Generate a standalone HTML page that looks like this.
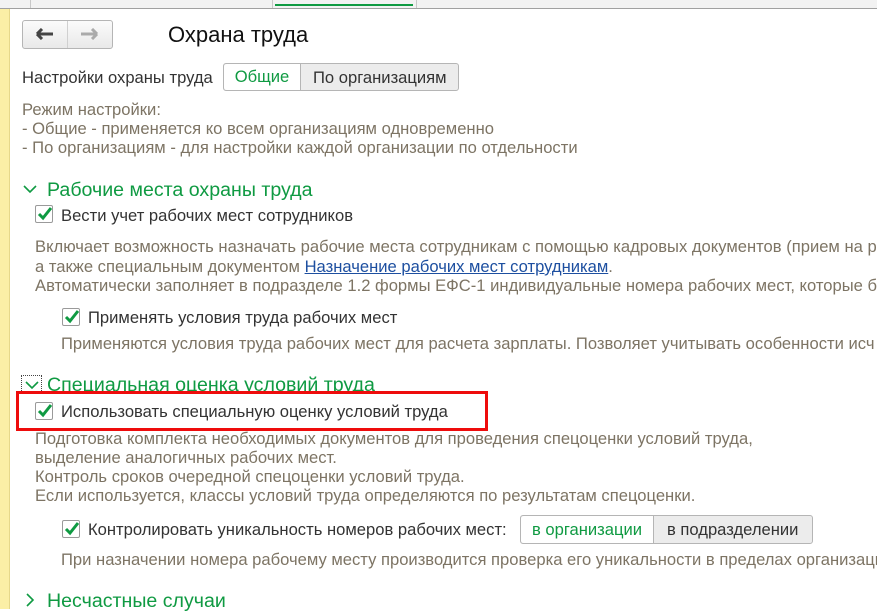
<!DOCTYPE html>
<html><head><meta charset="utf-8"><style>
body{margin:0;width:877px;height:609px;overflow:hidden;background:#fff;font-family:"Liberation Sans",Arial,sans-serif;font-size:16.6px;color:#333;position:relative}
.a{position:absolute;white-space:nowrap;line-height:19px}
.g{color:#7d7464}
.h{color:#0f9a42;font-size:19.6px;line-height:22px}
.cb{position:absolute;width:16px;height:16px;border:1px solid #9a9a9a;border-radius:2px;background:#fff}
.cb svg{position:absolute;left:1px;top:0}
.btn{position:absolute;border:1px solid #b5b5b5;border-radius:3px;background:linear-gradient(#fbfbfb,#e9e9e9);height:26px;line-height:26px;text-align:center;box-sizing:border-box}
.chev{position:absolute}
</style></head><body>
<div style="position:absolute;left:0;top:0;width:877px;height:8px;background:#f2f2f2;border-bottom:1px solid #a0a0a0"></div>
<div style="position:absolute;left:30px;top:0;width:1px;height:8px;background:#c8c8c8"></div>
<div style="position:absolute;left:272px;top:0;width:1px;height:8px;background:#c8c8c8"></div>
<div style="position:absolute;left:416px;top:0;width:1px;height:8px;background:#c8c8c8"></div>
<div style="position:absolute;left:275px;top:4px;width:138px;height:2px;background:#0f9a42"></div>
<div style="position:absolute;left:0;top:9px;width:9px;height:600px;background:#fbefa6;border-right:1px solid #e6d88a"></div>

<div class="btn" style="left:22px;top:20px;width:91px;height:29px;border-radius:3px"></div>
<div style="position:absolute;left:67px;top:21px;width:1px;height:27px;background:#d0d0d0"></div>
<svg style="position:absolute;left:36px;top:28px" width="18" height="12"><path d="M1 6H17M1 6L6 1M1 6L6 11" stroke="#444" stroke-width="3" fill="none"/></svg>
<svg style="position:absolute;left:81px;top:28px" width="18" height="12"><path d="M0 6H16M16 6L11 1M16 6L11 11" stroke="#aaa" stroke-width="3" fill="none"/></svg>
<div class="a" style="left:168px;top:22px;font-size:22px;line-height:26px;color:#111">Охрана труда</div>

<div class="a" style="left:22px;top:68px">Настройки охраны труда</div>
<div class="btn" style="left:223px;top:63px;width:236px;height:28px;background:#ececec"></div>
<div style="position:absolute;left:224px;top:64px;width:76px;height:26px;background:#fff;border-right:1px solid #b5b5b5;border-radius:3px 0 0 3px;line-height:26px;text-align:center;color:#0f9a42">Общие</div>
<div class="a" style="left:313px;top:68px">По организациям</div>

<div class="a g" style="left:22px;top:100px">Режим настройки:</div>
<div class="a g" style="left:22px;top:119px">- Общие - применяется ко всем организациям одновременно</div>
<div class="a g" style="left:22px;top:138px">- По организациям - для настройки каждой организации по отдельности</div>

<svg class="chev" style="left:23px;top:184px" width="14" height="10"><path d="M1 2L7 8L13 2" stroke="#0f9a42" stroke-width="1.6" fill="none"/></svg>
<div class="a h" style="left:47px;top:179px">Рабочие места охраны труда</div>
<div class="cb" style="left:35px;top:205px"><svg width="16" height="16"><path d="M2 8L6 12L14 2" stroke="#0f9a42" stroke-width="3" fill="none"/></svg></div>
<div class="a" style="left:61px;top:206px">Вести учет рабочих мест сотрудников</div>
<div class="a g" style="left:35px;top:237px">Включает возможность назначать рабочие места сотрудникам с помощью кадровых документов (прием на р</div>
<div class="a g" style="left:35px;top:257px">а также специальным документом <span style="color:#1d4fa0;text-decoration:underline">Назначение рабочих мест сотрудникам</span>.</div>
<div class="a g" style="left:35px;top:276px">Автоматически заполняет в подразделе 1.2 формы ЕФС-1 индивидуальные номера рабочих мест, которые б</div>
<div class="cb" style="left:62px;top:308px"><svg width="16" height="16"><path d="M2 8L6 12L14 2" stroke="#0f9a42" stroke-width="3" fill="none"/></svg></div>
<div class="a" style="left:88px;top:308px">Применять условия труда рабочих мест</div>
<div class="a g" style="left:61px;top:334px">Применяются условия труда рабочих мест для расчета зарплаты. Позволяет учитывать особенности исч</div>

<div style="position:absolute;left:21px;top:375px;width:21px;height:20px;border:1px dotted #444;box-sizing:border-box"></div>
<svg class="chev" style="left:25px;top:380px" width="14" height="10"><path d="M1 2L7 8L13 2" stroke="#0f9a42" stroke-width="1.6" fill="none"/></svg>
<div class="a h" style="left:47px;top:374px">Специальная оценка условий труда</div>
<div style="position:absolute;left:16px;top:391px;width:472px;height:40px;border:3px solid #ee0c0c;box-sizing:border-box;background:#fff"></div>
<div class="cb" style="left:35px;top:402px"><svg width="16" height="16"><path d="M2 8L6 12L14 2" stroke="#0f9a42" stroke-width="3" fill="none"/></svg></div>
<div class="a" style="left:61px;top:402px">Использовать специальную оценку условий труда</div>
<div class="a g" style="left:35px;top:429px">Подготовка комплекта необходимых документов для проведения спецоценки условий труда,</div>
<div class="a g" style="left:35px;top:448px">выделение аналогичных рабочих мест.</div>
<div class="a g" style="left:35px;top:467px">Контроль сроков очередной спецоценки условий труда.</div>
<div class="a g" style="left:35px;top:486px">Если используется, классы условий труда определяются по результатам спецоценки.</div>
<div class="cb" style="left:62px;top:520px"><svg width="16" height="16"><path d="M2 8L6 12L14 2" stroke="#0f9a42" stroke-width="3" fill="none"/></svg></div>
<div class="a" style="left:88px;top:520px">Контролировать уникальность номеров рабочих мест:</div>
<div class="btn" style="left:520px;top:515px;width:293px;height:29px;background:#ececec"></div>
<div style="position:absolute;left:521px;top:516px;width:132px;height:27px;background:#fff;border-right:1px solid #b5b5b5;border-radius:3px 0 0 3px;line-height:27px;text-align:center;color:#0f9a42">в организации</div>
<div class="a" style="left:667px;top:520px">в подразделении</div>
<div class="a g" style="left:61px;top:550px">При назначении номера рабочему месту производится проверка его уникальности в пределах организаци</div>

<svg class="chev" style="left:25px;top:593px" width="10" height="16"><path d="M2 1L8 7L2 13" stroke="#0f9a42" stroke-width="1.6" fill="none"/></svg>
<div class="a h" style="left:47px;top:590px">Несчастные случаи</div>
</body></html>
